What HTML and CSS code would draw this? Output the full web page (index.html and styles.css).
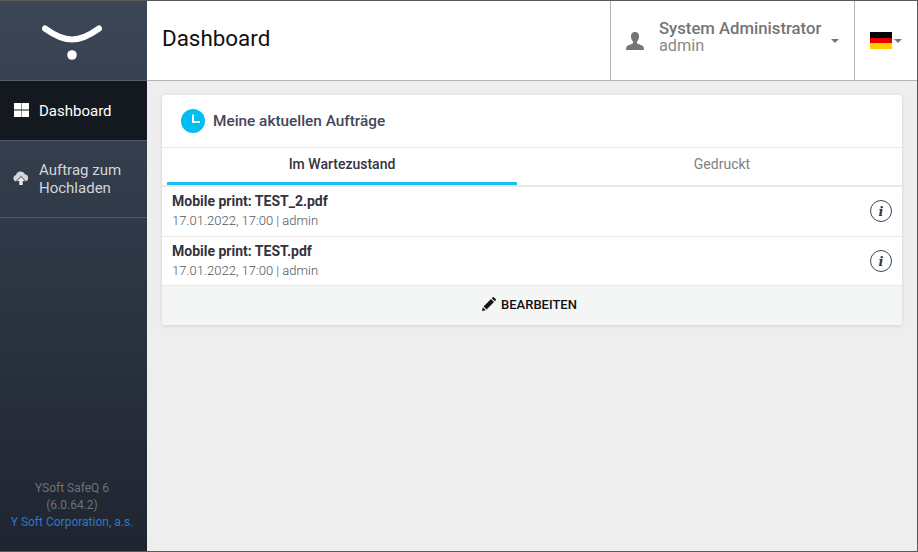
FILE: index.html
```html
<!DOCTYPE html>
<html lang="de">
<head>
<meta charset="utf-8">
<title>Dashboard</title>
<link rel="stylesheet" href="styles.css">
</head>
<body>
<div class="app">
  <aside class="sidebar">
    <div class="logo">
      <svg width="60" height="35" viewBox="0 0 60 35"><path d="M3 3.5 C12 10 20 14.5 30 14.5 C40 14.5 48 10 57 3.5" fill="none" stroke="#fff" stroke-width="6" stroke-linecap="round"/><circle cx="30" cy="30" r="4.8" fill="#fff"/></svg>
    </div>
    <nav class="nav">
      <a class="nav-item active">
        <svg class="nav-icon" width="15" height="14" viewBox="0 0 15 14"><rect x="0" y="0" width="15" height="14" fill="#fff"/><rect x="7" y="0" width="1" height="14" fill="#c08f3c"/><rect x="0" y="6.5" width="15" height="1" fill="#141920"/></svg>
        <span>Dashboard</span>
      </a>
      <a class="nav-item">
        <svg class="nav-icon upload-icon" width="16" height="15" viewBox="0 0 16 15"><path d="M3.5 11.5 A3.3 3.3 0 0 1 3 5 A4.8 4.8 0 0 1 12 4.3 A3.7 3.7 0 0 1 12.5 11.5 Z" fill="#d3d6da"/><path d="M8 7 L12 11 H9.7 V15 H6.3 V11 H4 Z" fill="#eceef0" stroke="#333c4b" stroke-width="1.4" paint-order="stroke"/></svg>
        <span>Auftrag zum<br>Hochladen</span>
      </a>
    </nav>
    <div class="about">
      <div>YSoft SafeQ 6</div>
      <div>(6.0.64.2)</div>
      <a class="about-link">Y Soft Corporation, a.s.</a>
    </div>
  </aside>
  <div class="main">
    <header class="topbar">
      <h1 class="title">Dashboard</h1>
      <div class="user">
        <svg class="user-icon" width="18" height="18" viewBox="0 0 18 18"><path d="M9 0 C12 0 13.3 2.2 13 5 C12.8 7 12 8.6 11 9.6 V11 C11.5 12.3 17 13 17.6 15 L18 18 H0 L.4 15 C1 13 6.5 12.3 7 11 V9.6 C6 8.6 5.2 7 5 5 C4.7 2.2 6 0 9 0 Z" fill="#757575"/></svg>
        <div class="user-text">
          <div class="user-name">System Administrator</div>
          <div class="user-login">admin</div>
        </div>
        <span class="caret user-caret"></span>
      </div>
      <div class="lang">
        <span class="flag"><i class="flag-black"></i><i class="flag-red"></i><i class="flag-gold"></i></span>
        <span class="caret"></span>
      </div>
    </header>
    <main class="content">
      <section class="card">
        <div class="card-head">
          <svg width="24" height="24" viewBox="0 0 24 24"><circle cx="12" cy="12" r="12" fill="#00bdf2"/><path d="M12 5.5 V13 H19" fill="none" stroke="#fff" stroke-width="2"/></svg>
          <h2 class="card-title">Meine aktuellen Aufträge</h2>
        </div>
        <div class="tabs">
          <div class="tab tab-active">Im Wartezustand</div>
          <div class="tab tab-other">Gedruckt</div>
        </div>
        <div class="job">
          <div>
            <div class="job-name">Mobile print: TEST_2.pdf</div>
            <div class="job-meta">17.01.2022, 17:00 | admin</div>
          </div>
          <span class="info">i</span>
        </div>
        <div class="job job-last">
          <div>
            <div class="job-name">Mobile print: TEST.pdf</div>
            <div class="job-meta">17.01.2022, 17:00 | admin</div>
          </div>
          <span class="info">i</span>
        </div>
        <div class="card-foot">
          <svg width="14" height="14" viewBox="0 0 14 14"><path d="M0 14 L.8 10.2 L3.8 13.2 Z M1.6 9.4 L9 2 L12 5 L4.6 12.4 Z M9.8 1.2 L10.8 .2 C11.1 0 11.5 0 11.8 .2 L13.8 2.2 C14 2.5 14 2.9 13.8 3.2 L12.8 4.2 Z" fill="#111"/></svg>
          <span>BEARBEITEN</span>
        </div>
      </section>
    </main>
  </div>
</div>
</body>
</html>
```

FILE: styles.css
```css
* { box-sizing: border-box; }
html, body { margin: 0; height: 100%; overflow: hidden; }
body { font-family: Roboto, "Liberation Sans", sans-serif; }
.app {
  width: 918px; height: 552px; display: flex;
  border: 1px solid #5a5a5a; border-left: 0;
  background: #eeeeee;
}
.sidebar {
  width: 147px; flex: none; display: flex; flex-direction: column;
  background: linear-gradient(#3b4657, #1f2530);
}
.logo {
  height: 80px; display: flex; align-items: center; justify-content: center;
  border-bottom: 1px solid #5a626e; padding: 3px 3px 0 0;
}
.nav-item {
  display: flex; align-items: center; gap: 10px; padding-left: 14px;
  color: #d3d6da; font-size: 15px; line-height: 18px;
  border-bottom: 1px solid #4f5764;
}
.nav-item:nth-child(2) { height: 77px; }
.active { height: 60px; background: #141920; color: #fff; }
.active .nav-icon { margin-bottom: 2px; }
.nav-icon { flex: none; }
.upload-icon { margin: 0 0 3px -1px; }
.about {
  margin-top: auto; padding-bottom: 20px; padding-right: 3px; text-align: center;
  font-size: 12px; line-height: 17px; color: #6c727b;
}
.about-link { color: #2d77c9; }
.main { flex: 1; min-width: 0; display: flex; flex-direction: column; }
.topbar {
  height: 80px; flex: none; display: flex; align-items: stretch;
  background: #fff; border-bottom: 1px solid #b3b3b3;
}
.title {
  flex: 1; margin: 0; padding-left: 15px; align-self: center;
  font-size: 22.4px; font-weight: 400; color: #111; padding-bottom: 5px;
}
.user {
  width: 244px; display: flex; align-items: center; padding-left: 15px;
  border-left: 1px solid #b3b3b3; position: relative;
}
.user-icon { flex: none; margin-right: 15px; }
.user-text { padding-bottom: 7px; }
.user-name { font-size: 16.7px; line-height: 18px; font-weight: 500; color: #757575; white-space: nowrap; }
.user-login { font-size: 16.3px; line-height: 16px; color: #8a8a8a; }
.caret {
  display: inline-block; width: 0; height: 0;
  border-left: 4px solid transparent; border-right: 4px solid transparent;
  border-top: 4px solid #777;
}
.user-caret { margin-left: 10px; }
.lang {
  width: 63px; display: flex; align-items: center; padding-left: 15px; gap: 2px;
  border-left: 1px solid #b3b3b3;
}
.flag { width: 22px; display: flex; flex-direction: column; }
.flag i { display: block; height: 5.67px; }
.flag-black { background: #000; }
.flag-red { background: #e40000; }
.flag-gold { background: #ffcc00; }
.content { flex: 1; padding: 14px 15px; }
.card {
  background: #fff; border-radius: 3px; overflow: hidden;
  box-shadow: 0 1px 4px rgba(0,0,0,.12);
}
.card-head {
  height: 53px; display: flex; align-items: center; gap: 8px; padding-left: 19px;
  border-bottom: 1px solid #e8e8e8;
}
.card-title { margin: 0; font-size: 15.35px; font-weight: 500; color: #45465a; }
.tabs { height: 39px; display: flex; padding-left: 5px; border-bottom: 2px solid #e8e8e8; }
.tab {
  height: 37px; display: flex; align-items: center; justify-content: center;
  font-size: 14px;
}
.tab-active { flex: none; width: 350px; font-weight: 500; color: #333340; border-bottom: 3px solid #1cbdf0; padding-bottom: 2px; }
.tab-other { flex: 1; margin-left: 25px; font-weight: 400; color: #808080; padding-bottom: 5px; }
.job {
  height: 50px; display: flex; align-items: flex-start; justify-content: space-between;
  padding: 5px 10px 0; border-bottom: 1px solid #e8e8e8;
}
.job-last { height: 49px; }
.job-name { font-size: 14px; line-height: 18px; font-weight: 700; color: #333340; }
.job-meta { font-size: 13px; line-height: 18px; margin-top: 2px; font-weight: 300; color: #555; }
.info {
  width: 22px; height: 22px; margin-top: 8px; border: 1px solid #3f4656; border-radius: 50%;
  display: flex; align-items: center; justify-content: center;
  font-family: "DejaVu Serif", serif; font-style: italic; font-weight: 700; font-size: 13px; color: #333a4a;
}
.card-foot {
  height: 39px; display: flex; align-items: center; justify-content: center; gap: 5px;
  padding: 0 5px 3px 0;
  background: #f4f6f5; font-size: 13px; font-weight: 500; color: #111;
}
```
